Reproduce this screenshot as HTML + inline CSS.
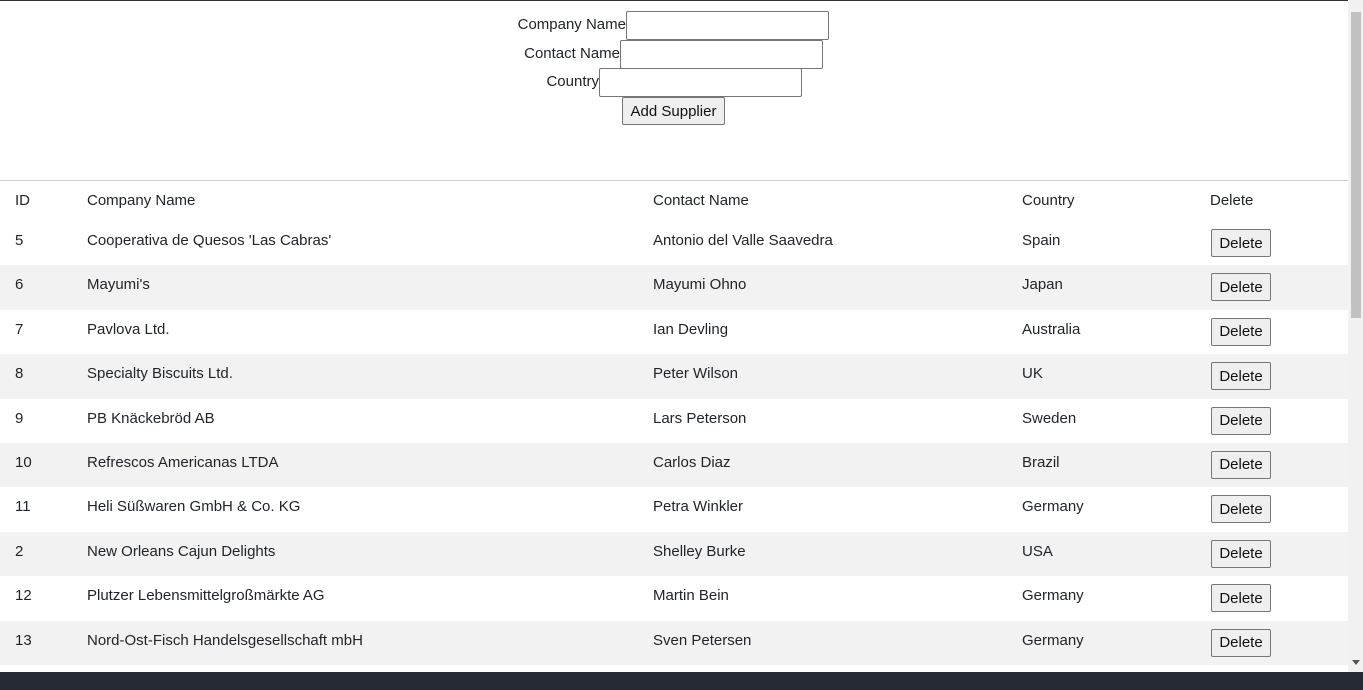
<!DOCTYPE html>
<html><head><style>
body{margin:0;width:1363px;height:690px;overflow:hidden;font-family:"Liberation Sans",sans-serif;font-size:15px;color:#212529;background:#fff;position:relative}
.top{position:absolute;left:0;top:0;width:1348px;height:1px;background:#333}
.l{position:absolute;white-space:nowrap;text-align:right}
input{position:absolute;box-sizing:border-box;width:203px;height:29px;border:1px solid #767676;border-radius:2px;margin:0;padding:0}
button{font-family:inherit;font-size:15px;color:#111;background:#efefef;border:1px solid #767676;border-radius:2px;padding:0;margin:0}
.tbl{position:absolute;left:0;top:180px;width:1348px;border-top:1px solid #ccc}
.row{position:relative;height:44.4px}
.row div{position:absolute;top:11px}
.row button{position:absolute;left:1211px;top:8px;width:60px;height:28px}
.hd{height:40px;position:relative}
.hd div{position:absolute;top:11px}
.c1{left:15px}.c2{left:87px}.c3{left:653px}.c4{left:1022px}.c5{left:1210px}
.sb{position:absolute;left:1348px;top:0;width:15px;height:672px;background:#f1f1f1}
.th{position:absolute;left:1351px;top:12px;width:10px;height:306px;background:#c1c1c1}
.bot{position:absolute;left:0;top:672px;width:1363px;height:18px;background:#262a33}
</style></head><body>
<div class="top"></div>
<div class="l" style="right:737px;top:16px">Company Name</div><input style="left:626px;top:11px">
<div class="l" style="right:743px;top:45px">Contact Name</div><input style="left:620px;top:40px">
<div class="l" style="right:764px;top:73px">Country</div><input style="left:599px;top:68px">
<button style="position:absolute;left:622px;top:97px;width:103px;height:28px">Add Supplier</button>
<div class="tbl">
<div class="hd"><div class="c1">ID</div><div class="c2">Company Name</div><div class="c3">Contact Name</div><div class="c4">Country</div><div class="c5">Delete</div></div>
<div>
<div class="row" style="background:#fff"><div class="c1">5</div><div class="c2">Cooperativa de Quesos 'Las Cabras'</div><div class="c3">Antonio del Valle Saavedra</div><div class="c4">Spain</div><button>Delete</button></div>
<div class="row" style="background:#f2f2f2"><div class="c1">6</div><div class="c2">Mayumi's</div><div class="c3">Mayumi Ohno</div><div class="c4">Japan</div><button>Delete</button></div>
<div class="row" style="background:#fff"><div class="c1">7</div><div class="c2">Pavlova Ltd.</div><div class="c3">Ian Devling</div><div class="c4">Australia</div><button>Delete</button></div>
<div class="row" style="background:#f2f2f2"><div class="c1">8</div><div class="c2">Specialty Biscuits Ltd.</div><div class="c3">Peter Wilson</div><div class="c4">UK</div><button>Delete</button></div>
<div class="row" style="background:#fff"><div class="c1">9</div><div class="c2">PB Knäckebröd AB</div><div class="c3">Lars Peterson</div><div class="c4">Sweden</div><button>Delete</button></div>
<div class="row" style="background:#f2f2f2"><div class="c1">10</div><div class="c2">Refrescos Americanas LTDA</div><div class="c3">Carlos Diaz</div><div class="c4">Brazil</div><button>Delete</button></div>
<div class="row" style="background:#fff"><div class="c1">11</div><div class="c2">Heli Süßwaren GmbH &amp; Co. KG</div><div class="c3">Petra Winkler</div><div class="c4">Germany</div><button>Delete</button></div>
<div class="row" style="background:#f2f2f2"><div class="c1">2</div><div class="c2">New Orleans Cajun Delights</div><div class="c3">Shelley Burke</div><div class="c4">USA</div><button>Delete</button></div>
<div class="row" style="background:#fff"><div class="c1">12</div><div class="c2">Plutzer Lebensmittelgroßmärkte AG</div><div class="c3">Martin Bein</div><div class="c4">Germany</div><button>Delete</button></div>
<div class="row" style="background:#f2f2f2"><div class="c1">13</div><div class="c2">Nord-Ost-Fisch Handelsgesellschaft mbH</div><div class="c3">Sven Petersen</div><div class="c4">Germany</div><button>Delete</button></div>
</div></div>
<div class="sb"></div><div class="th"></div>
<div style="position:absolute;left:1352px;top:660px;width:0;height:0;border-left:4px solid transparent;border-right:4px solid transparent;border-top:5px solid #555"></div>
<div class="bot"></div>
</body></html>
